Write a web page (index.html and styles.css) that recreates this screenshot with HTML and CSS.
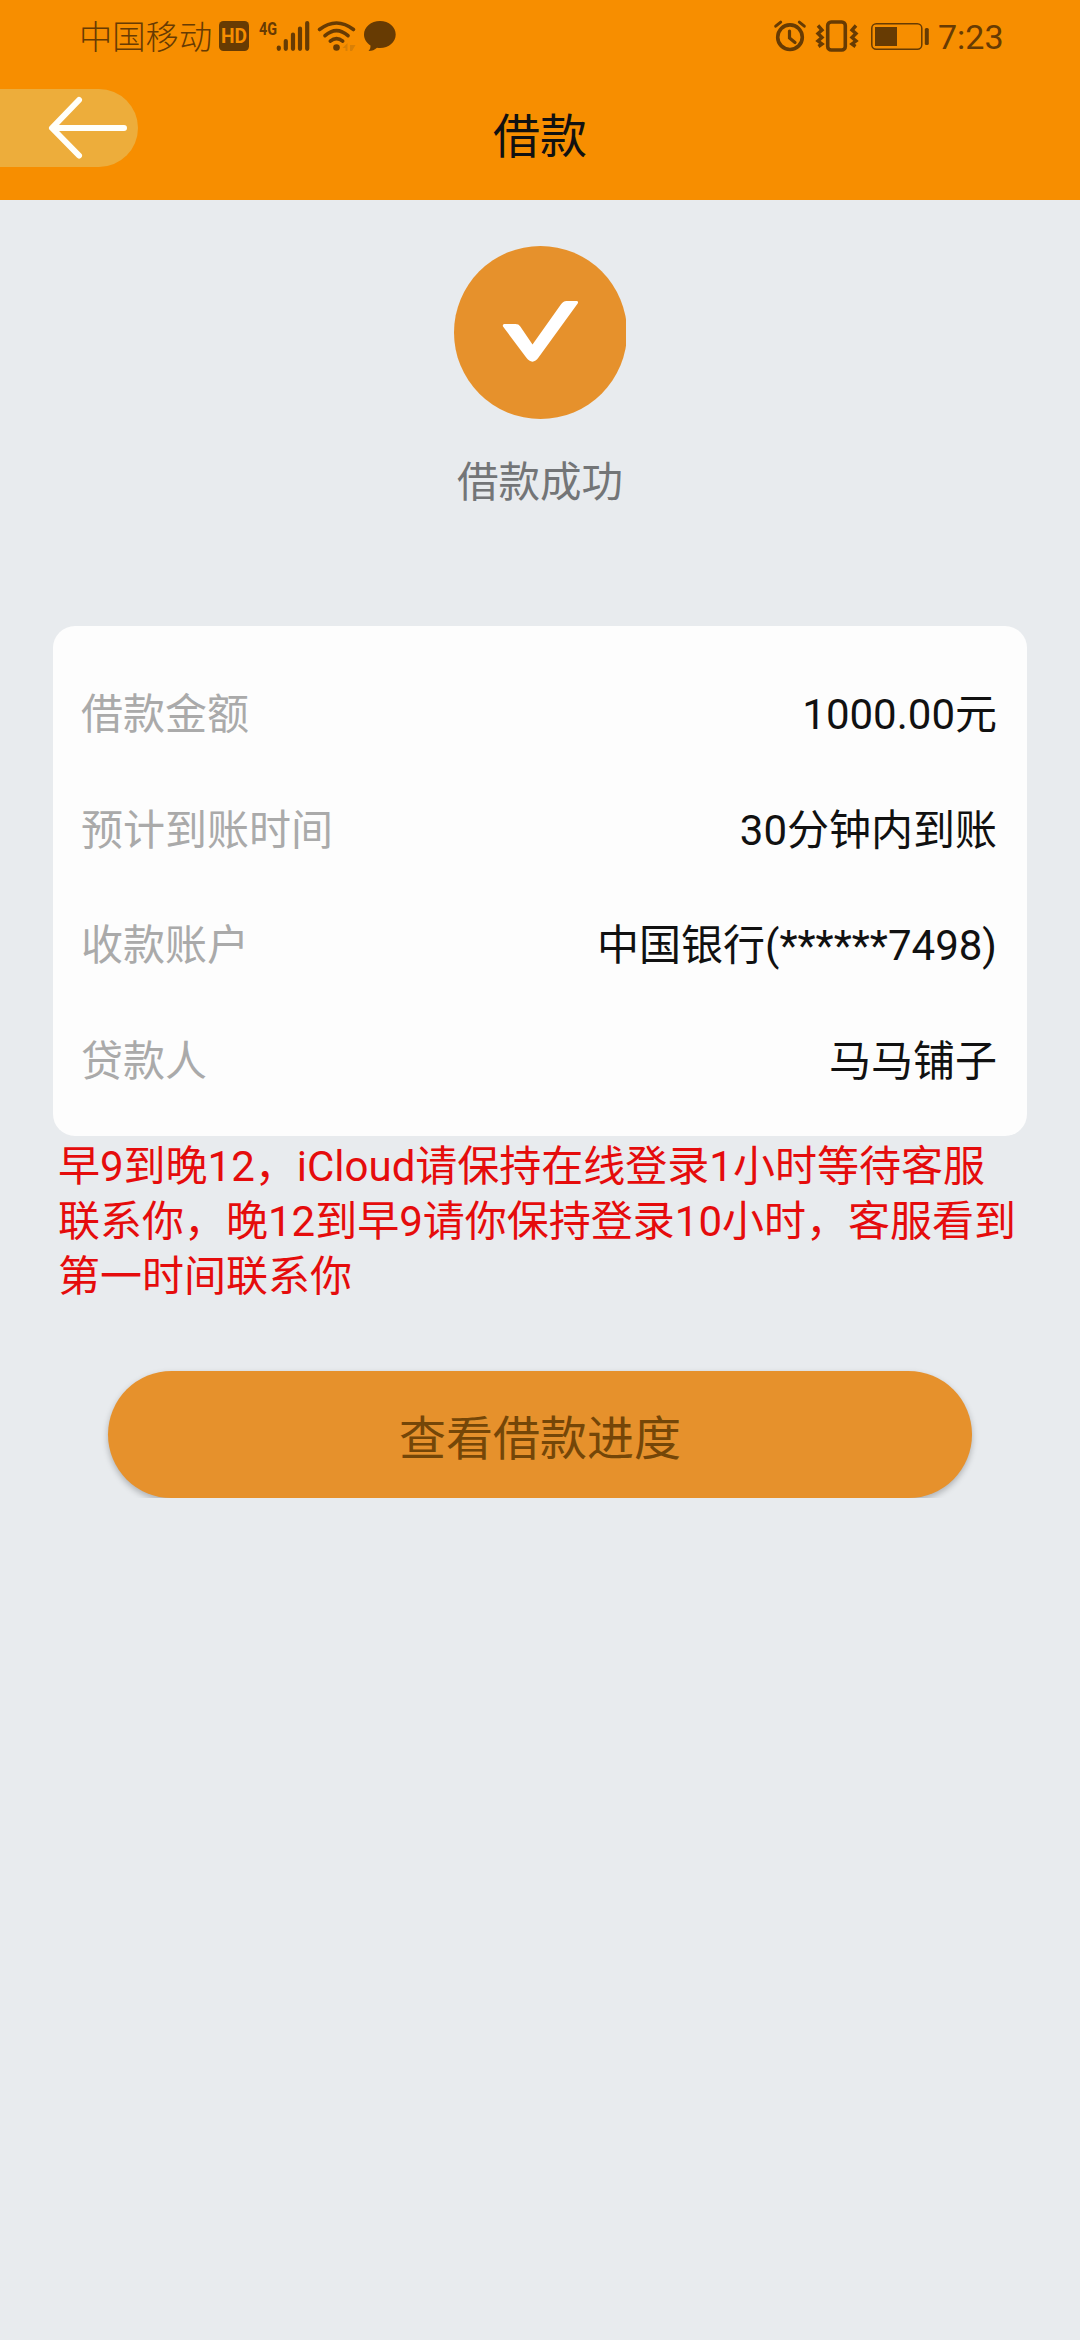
FILE: index.html
```html
<!DOCTYPE html>
<html lang="zh-CN">
<head>
<meta charset="utf-8">
<title>借款</title>
<link rel="stylesheet" href="styles.css">
</head>
<body>
<header class="top">
  <div class="status">
    <span class="carrier">中国移动</span>
    <svg class="status-icons" width="190" height="72" viewBox="0 0 190 72">
      <rect x="4" y="21" width="30" height="30" rx="4.5" fill="#673b03"/>
      <text class="hd" x="19" y="43" text-anchor="middle" textLength="26" lengthAdjust="spacingAndGlyphs">HD</text>
      <text class="net" x="44" y="35" textLength="18" lengthAdjust="spacingAndGlyphs">4G</text>
      <g stroke="#673b03" stroke-width="4.2" stroke-linecap="round">
        <path d="M63.8 47.5v1.3M70.8 41v7.8M78 34.500v14.300M85 28.500v20.300M92.200 23v25.800"/>
      </g>
      <g fill="none" stroke="#673b03" stroke-width="3.600" stroke-linecap="round">
        <path d="M104.500 29.500Q121.500 16.500 138.500 29.500M110 35.700Q121.500 25.500 133 35.700M115.300 41.200Q121.500 36 127.700 41.200"/>
      </g>
      <circle cx="121.500" cy="47.500" r="3.300" fill="#673b03"/>
      <path d="M132.500 43v8h-2v-3h-3zM135 45h5.500l-3.500 6h-2z" fill="#d98006"/>
      <path d="M165 21c9 0 15.700 6 15.700 13.500S174 48 165 48c-1 0-2 0-3-.3-2 2-5 3.300-8.500 3.300 1.500-1.500 2-3 2-5.500-4-2.500-6.500-6.500-6.500-11C149 27 156 21 165 21z" fill="#673b03"/>
    </svg>
    <svg class="sys-icons" width="160" height="72" viewBox="0 0 160 72">
      <g fill="none" stroke="#673b03" stroke-width="3.600">
        <circle cx="20" cy="37.200" r="12.300"/>
        <path d="M19.500 31v7l5.500 4.500" stroke-width="3.200" stroke-linecap="round"/>
        <path d="M5.700 26.200l5-4M34.300 26.200l-5-4" stroke-linecap="round" stroke-width="3"/>
        <rect x="57.700" y="22" width="17.600" height="28" rx="3.500"/>
        <path d="M48 25.500l4 4.500-4 3.500 4 4-4 3.500 4 3-3.500 2.500M86 25.500l-4 4.500 4 3.500-4 4 4 3.500-4 3 3.500 2.500" stroke-width="3.400"/>
        <rect x="101.800" y="23.800" width="50" height="25.500" rx="4.500" stroke-width="1.500"/>
      </g>
      <rect x="105" y="27" width="22" height="19" fill="#673b03"/>
      <rect x="154.800" y="28" width="4" height="17" rx="1.500" fill="#673b03"/>
    </svg>
    <span class="clock">7:23</span>
  </div>
  <div class="nav">
    <div class="back">
      <svg width="138" height="78" viewBox="0 0 138 78">
        <path d="M79 11L52 39l27 27.500M54 39h70" fill="none" stroke="#fffffa" stroke-width="6" stroke-linecap="round" stroke-linejoin="round"/>
      </svg>
    </div>
    <h1 class="title">借款</h1>
  </div>
</header>
<main class="content">
  <svg class="success" width="172" height="173" viewBox="0 0 172 173">
    <circle cx="86.500" cy="86.500" r="86.500" fill="#e6912c"/>
    <path d="M49 66.500c-.6-1.400.2-2.500 1.800-2.500h10.500c2.500 0 3.800.8 5 2.600l12.200 18 28-39.600c2-2.700 3.400-4 6.200-4h9.300c2 0 2.700 1 1.500 2.800L84.500 97.500c-3.500 5.500-8.500 5.500-12.300 0z" fill="#fff" transform="translate(0 14)"/>
  </svg>
  <p class="result">借款成功</p>
  <dl class="card">
    <div class="row"><dt>借款金额</dt><dd>1000.00元</dd></div>
    <div class="row"><dt>预计到账时间</dt><dd>30分钟内到账</dd></div>
    <div class="row"><dt>收款账户</dt><dd>中国银行(******7498)</dd></div>
    <div class="row"><dt>贷款人</dt><dd>马马铺子</dd></div>
  </dl>
  <p class="notice">早9到晚12，iCloud请保持在线登录1小时等待客服<br>联系你，晚12到早9请你保持登录10小时，客服看到<br>第一时间联系你</p>
  <div class="action"><button class="button">查看借款进度</button></div>
</main>
</body>
</html>
```

FILE: styles.css
```css
* { box-sizing: border-box; margin: 0; padding: 0; }
body {
  width: 1080px;
  min-height: 2340px;
  background: #e8ebee;
  color: #111;
  font-family: Roboto, "Noto Sans CJK SC", sans-serif;
  font-size: 42px;
}
.top { height: 200px; background: #f78e00; }
.status {
  height: 72px;
  display: flex;
  padding-left: 79px;
  color: #673b03;
  line-height: 75px;
}
.carrier { width: 136px; font-size: 33.300px; font-weight: 300; white-space: nowrap; }
.status svg { flex: none; }
.sys-icons { margin-left: 365px; }
.clock { margin-left: 8px; font-size: 34px; }
.hd { font: 700 20px Roboto, sans-serif; fill: #f78e00; }
.net { font: 700 19px Roboto, sans-serif; fill: #673b03; }
.nav { height: 128px; display: grid; grid-template-columns: 138px 1fr 138px; }
.back {
  height: 78px;
  margin-top: 17px;
  background: #edad3b;
  border-radius: 0 39px 39px 0;
}
.back svg { display: block; }
.title { font-size: 47px; font-weight: 400; line-height: 130px; text-align: center; }
.content { display: flex; flex-direction: column; align-items: center; padding-top: 46px; }
.success { display: block; }
.result { margin-top: 36px; line-height: 56px; color: #737577; font-size: 41.500px; }
.card {
  width: 974px;
  height: 510px;
  margin-top: 115px;
  padding: 31px 30px 0 28px;
  background: #fdfdfd;
  border-radius: 22px;
}
.row { display: flex; justify-content: space-between; height: 115.500px; line-height: 115.500px; }
.row dt { color: #aaa; }
.notice { width: 974px; margin-top: 3px; padding-left: 5px; color: #e50c0c; line-height: 55px; white-space: nowrap; }
.action { width: 904px; padding: 67px 20px 0; overflow: hidden; }
.button {
  display: block;
  width: 864px;
  height: 127px;
  border: 0;
  border-radius: 64px;
  background: #e6912c;
  color: #744608;
  font: inherit;
  font-size: 47px;
  box-shadow: 0 3px 6px rgba(0, 0, 0, .25);
}
```
